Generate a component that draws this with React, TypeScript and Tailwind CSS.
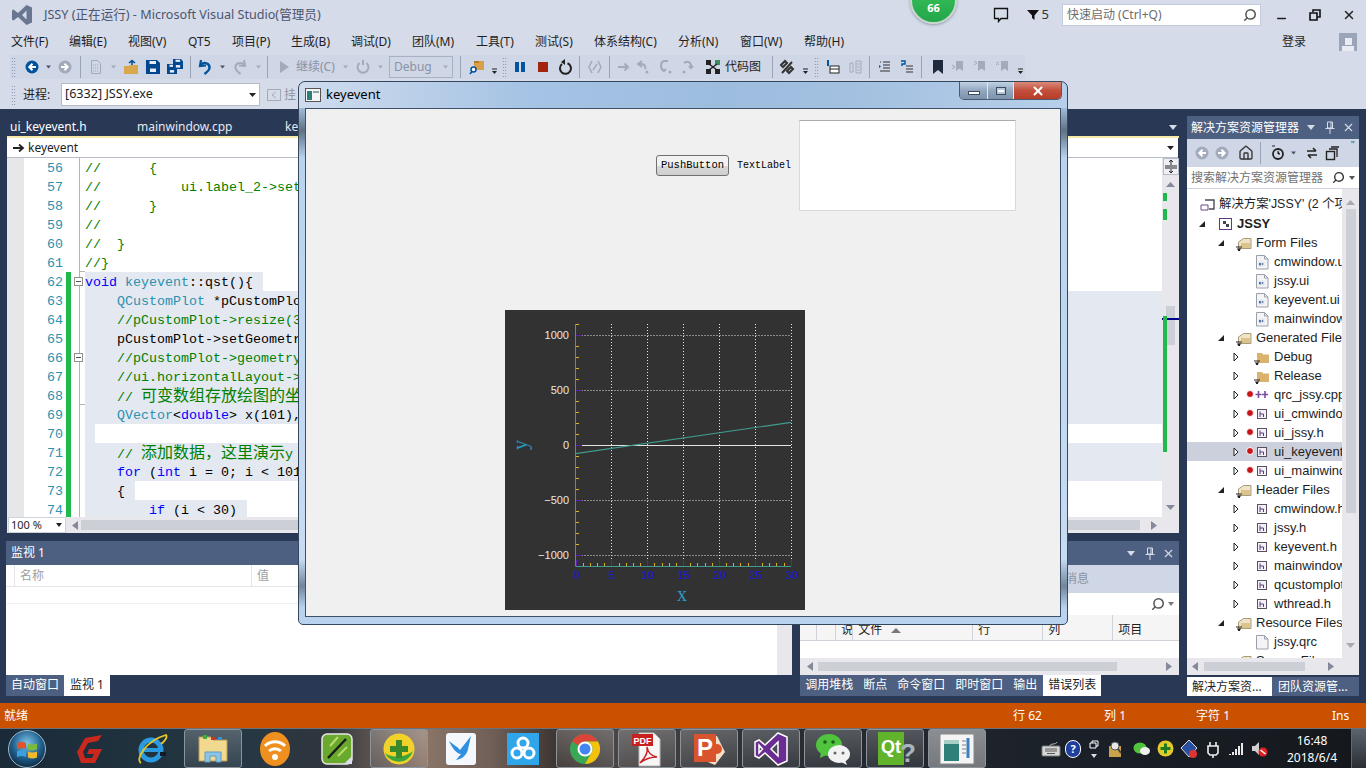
import type { ReactNode } from "react"
import { Search, X, Minus, Home } from "lucide-react"

type IconProps = { className?: string; w?: number; h?: number; children?: ReactNode }

function I({ className = "", w = 16, h = 16, children }: IconProps) {
  return (
    <svg width={w} height={h} viewBox={`0 0 ${w} ${h}`} className={`shrink-0 ${className}`}>
      {children}
    </svg>
  )
}

const Sep = ({ className = "" }: { className?: string }) => <div className={`w-px h-[22px] shrink-0 bg-[#9aa3b5] ${className}`} />

const Grip = ({ className = "" }: { className?: string }) => (
  <div className={`w-[5px] h-[20px] shrink-0 bg-[radial-gradient(#7b86a0_0.7px,transparent_0.8px)] bg-[length:2.5px_3px] ${className}`} />
)

const Drop = ({ className = "", color = "#4a5468" }: { className?: string; color?: string }) => (
  <I w={5} className={className}><path d="M0 6.5h5L2.5 9.5z" fill={color} /></I>
)

const Overflow = ({ className = "" }: { className?: string }) => (
  <I w={7} className={className}><path d="M1 10h5" stroke="#222" /><path d="M1 12h5l-2.5 3z" fill="#222" /></I>
)

const Circ = ({ color, dir }: { color: string; dir: "l" | "r" }) => (
  <>
    <circle cx="8" cy="8" r="6.5" fill={color} />
    <path d={dir === "l" ? "M12 8H6M8.5 4.8 5.3 8l3.2 3.2" : "M4 8h6M7.5 4.8 10.7 8l-3.2 3.2"} stroke="#fff" strokeWidth="2" fill="none" />
  </>
)

const Floppy = ({ x = 0, y = 0, s = 14 }: { x?: number; y?: number; s?: number }) => {
  const k = s / 14
  return (
    <g transform={`translate(${x} ${y}) scale(${k})`}>
      <path d="M0 0h11l3 3v11H0z" fill="#00478f" />
      <rect x="3.5" y="1" width="6.5" height="3" fill="#e8edf5" />
      <rect x="4" y="8.5" width="6" height="3.5" fill="#e8edf5" />
    </g>
  )
}

const GrayArrow = ({ d }: { d: string }) => <path d={d} stroke="#a3abbb" strokeWidth="2" fill="none" />

const PinIcon = ({ className = "" }: { className?: string }) => (
  <svg width="10" height="13" viewBox="0 0 10 13" className={className}>
    <path d="M2.500 1h5v6h-5zM6 1v6M0.500 7.500h9M5 8v5" stroke="currentColor" fill="none" />
  </svg>
)

const IconFolderFilter = ({ solid = false }: { solid?: boolean }) => (
  <I w={16} h={16}>
    {solid ? (
      <path d="M3 4h5l1 1.5h6V14H3z" fill="#d9b26d" />
    ) : (
      <>
        <path d="M2.5 13.5V7l5-3.5h7.5v10z" fill="#efe3c6" stroke="#a99a7a" />
        <path d="M5 8h9v5H5z" fill="#dcc48f" />
      </>
    )}
    <path d="M0 12h6M1 14h4M2.5 14v2h1v-2" stroke="#222" strokeWidth="1" fill="none" />
  </I>
)

const IconFile = ({ label }: { label?: string }) => (
  <I w={14} h={16}>
    <path d="M1.5 1.5h8l3.5 3.5v10H1.5z" fill="#f4f4f6" stroke="#9aa0ab" />
    <path d="M9.5 1.5V5H13" fill="none" stroke="#9aa0ab" />
    {label && <rect x="3.5" y="7.5" width="6" height="5" fill="#e2e5ea" />}
    {label && <path d="M4.5 9v2h1.2V9M7.7 9v2" stroke="#4a6fa0" strokeWidth="1" fill="none" />}
  </I>
)

const IconH = () => (
  <I w={12} h={16}>
    <rect x="1.5" y="3.5" width="9" height="9" fill="#f4f0f8" stroke="#5a5060" />
    <path d="M4 5.5v5.5M4 8h3.5v3" stroke="#5a3a7a" fill="none" />
  </I>
)

type TreeRow = {
  text: string
  arrow?: "open" | "closed"
  level: "sol" | "proj" | "group" | "file"
  icon: ReactNode
  dot?: boolean
  bold?: boolean
  selected?: boolean
}

const uiIcon = <IconFile label="ui" />
const hRow = (text: string, dot = false, selected = false): TreeRow => ({
  text,
  arrow: "closed",
  level: "file",
  icon: <span className="w-[14px] flex justify-center"><IconH /></span>,
  dot,
  selected,
})

const tree: TreeRow[] = [
  {
    text: "解决方案'JSSY' (2 个项目)",
    level: "sol",
    icon: (
      <I w={15}>
        <path d="M5 3h9v9H9" stroke="#4b4b55" strokeWidth="1.4" fill="none" />
        <path d="M1 8h7v5H1z" fill="#fff" stroke="#6a4b8a" />
      </I>
    ),
  },
  {
    text: "JSSY",
    arrow: "open",
    level: "proj",
    bold: true,
    icon: (
      <I w={15}>
        <rect x="1.5" y="2.5" width="12" height="11" fill="#fff" stroke="#5e3a86" />
        <path d="M5 5v3h3v3h3V8H8V5z" fill="#40474f" />
      </I>
    ),
  },
  { text: "Form Files", arrow: "open", level: "group", icon: <IconFolderFilter /> },
  { text: "cmwindow.ui", level: "file", icon: uiIcon },
  { text: "jssy.ui", level: "file", icon: uiIcon },
  { text: "keyevent.ui", level: "file", icon: uiIcon },
  { text: "mainwindow.ui", level: "file", icon: uiIcon },
  { text: "Generated Files", arrow: "open", level: "group", icon: <IconFolderFilter /> },
  { text: "Debug", arrow: "closed", level: "file", icon: <IconFolderFilter solid /> },
  { text: "Release", arrow: "closed", level: "file", icon: <IconFolderFilter solid /> },
  {
    text: "qrc_jssy.cpp",
    arrow: "closed",
    level: "file",
    dot: true,
    icon: (
      <I w={14}>
        <path d="M3.5 4v7M0.5 7.5h6M10 4v7M7 7.5h6" stroke="#7a4aa0" strokeWidth="1.6" />
      </I>
    ),
  },
  hRow("ui_cmwindow.h", true),
  hRow("ui_jssy.h", true),
  hRow("ui_keyevent.h", true, true),
  hRow("ui_mainwindow.h", true),
  { text: "Header Files", arrow: "open", level: "group", icon: <IconFolderFilter /> },
  hRow("cmwindow.h"),
  hRow("jssy.h"),
  hRow("keyevent.h"),
  hRow("mainwindow.h"),
  hRow("qcustomplot.h"),
  hRow("wthread.h"),
  { text: "Resource Files", arrow: "open", level: "group", icon: <IconFolderFilter /> },
  { text: "jssy.qrc", level: "file", icon: <IconFile /> },
  { text: "Source Files", arrow: "open", level: "group", icon: <IconFolderFilter /> },
]

const levelPad: Record<TreeRow["level"], string> = {
  sol: "pl-[13px] text-[12.4px]",
  proj: "pl-[31px] text-[13px]",
  group: "pl-[50px] text-[13px]",
  file: "pl-[68px] text-[13px]",
}

function Tree() {
  return (
    <div className="flex-1 overflow-hidden pt-[6px] bg-white font-['Liberation_Sans','Noto_Sans_CJK_SC',sans-serif]">
      {tree.map((r) => (
        <div key={r.text} className={`relative h-[19px] flex items-center whitespace-nowrap text-[#1e1e1e] ${levelPad[r.level]} ${r.selected ? "bg-[#ccd0dc]" : ""}`}>
          {r.arrow === "open" && (
            <span className="absolute -ml-[20px] w-[8px] h-[8px]">
              <svg width="8" height="8"><path d="M7 1v6H1z" fill="#222" /></svg>
            </span>
          )}
          {r.arrow === "closed" && (
            <span className="absolute left-[46px]">
              <svg width="6" height="10"><path d="M1 1l4 4-4 4z" fill="#fff" stroke="#222" /></svg>
            </span>
          )}
          {r.dot && <span className="absolute left-[59px] w-[6px] h-[6px] rounded-full bg-[#c9141a] border border-white box-content -mt-px" />}
          <span className="flex justify-center w-[14px] shrink-0">{r.icon}</span>
          <span className={`ml-[5px] ${r.bold ? "font-bold" : ""}`}>{r.text}</span>
        </div>
      ))}
    </div>
  )
}

const comment = "text-[#008000]"
const cjk = "font-['Noto_Sans_CJK_SC'] text-[16px] leading-none"
const selFull = "w-full bg-[#e3e8f1]"

const Ty = ({ children }: { children: ReactNode }) => <span className="text-[#2b91af]">{children}</span>
const Kw = ({ children }: { children: ReactNode }) => <span className="text-[#0000ff]">{children}</span>

const code: { n: number; sel?: string; body: ReactNode }[] = [
  { n: 56, body: <span className={comment}>{"//      {"}</span> },
  { n: 57, body: <span className={comment}>{"//          ui.label_2->setText"}</span> },
  { n: 58, body: <span className={comment}>{"//      }"}</span> },
  { n: 59, body: <span className={comment}>{"//"}</span> },
  { n: 60, body: <span className={comment}>{"//  }"}</span> },
  { n: 61, body: <span className={comment}>{"//}"}</span> },
  { n: 62, sel: "w-[178px] bg-[#e3e8f1]", body: <><Kw>void</Kw> <Ty>keyevent</Ty>{"::qst(){"}</> },
  { n: 63, sel: selFull, body: <>{"    "}<Ty>QCustomPlot</Ty>{" *pCustomPlot"}</> },
  { n: 64, sel: selFull, body: <span className={comment}>{"    //pCustomPlot->resize(300"}</span> },
  { n: 65, sel: selFull, body: <>{"    pCustomPlot->setGeometry"}</> },
  { n: 66, sel: selFull, body: <span className={comment}>{"    //pCustomPlot->geometry"}</span> },
  { n: 67, sel: selFull, body: <span className={comment}>{"    //ui.horizontalLayout->"}</span> },
  { n: 68, sel: selFull, body: <span className={comment}>{"    // "}<span className={cjk}>可变数组存放绘图的坐标</span></span> },
  { n: 69, sel: selFull, body: <>{"    "}<Ty>QVector</Ty>{"<"}<Kw>double</Kw>{"> x(101),"}</> },
  { n: 70, sel: "w-[10px] bg-[#e3e8f1]", body: null },
  { n: 71, sel: selFull, body: <span className={comment}>{"    // "}<span className={cjk}>添加数据，这里演示</span>y</span> },
  { n: 72, sel: selFull, body: <>{"    "}<Kw>for</Kw>{" ("}<Kw>int</Kw>{" i = 0; i < 101"}</> },
  { n: 73, sel: "w-[50px] bg-[#e3e8f1]", body: <>{"    {"}</> },
  { n: 74, sel: "w-[162px] bg-[#e3e8f1]", body: <>{"        "}<Kw>if</Kw>{" (i < 30)"}</> },
]

function CodeEditor() {
  return (
    <div className="flex-1 overflow-hidden bg-white font-['Liberation_Mono','Noto_Sans_CJK_SC',monospace] text-[13.33px] leading-[22px]">
      {code.map((l) => (
        <div key={l.n} className="flex h-[19px] whitespace-pre">
          <div className="w-[17px] shrink-0 bg-[#e6e7e8]" />
          <div className="w-[39px] shrink-0 text-right text-[#2b91af]">{l.n}</div>
          <div className="w-[3px] shrink-0" />
          <div className={`w-[5px] shrink-0 ${l.n >= 62 ? "bg-[#1fba4b]" : ""}`} />
          <div className="relative w-[14px] shrink-0">
            <div className="absolute left-[8px] top-0 bottom-0 w-px bg-[#b4b4b4]" />
            {(l.n === 61 || l.n === 68) && <div className="absolute left-[8px] bottom-0 w-[6px] h-px bg-[#b4b4b4]" />}
            {(l.n === 62 || l.n === 66) && (
              <div className="absolute left-[3px] top-[5px] w-[9px] h-[9px] border border-[#8f8f8f] bg-white flex items-center justify-center">
                <div className="w-[5px] h-px bg-[#555]" />
              </div>
            )}
          </div>
          <div className="flex-1 min-w-0 overflow-hidden">
            <div className={`h-[19px] text-black ${l.sel ?? ""}`}>{l.body}</div>
          </div>
        </div>
      ))}
    </div>
  )
}

function Chart() {
  const x = (v: number) => Math.round(70.5 + (v / 30) * 215.2) + 0.5
  const y = (v: number) => Math.round(135 - (v / 500) * 55) + 0.5
  const xs = [0, 5, 10, 15, 20, 25, 30]
  const ys = [1000, 500, 0, -500, -1000]
  const xMinor = Array.from({ length: 31 }, (_, i) => i).filter((v) => v % 5 !== 0)
  const yMinor = Array.from({ length: 23 }, (_, i) => -1100 + i * 100).filter((v) => v % 500 !== 0)
  return (
    <svg width="300" height="300" viewBox="0 0 300 300" className="block ml-[199px] mt-[99px] bg-[#323232]">
      {xs.slice(1).map((v) => <line key={v} x1={x(v)} x2={x(v)} y1="14" y2="256" stroke="#e4e4e4" strokeDasharray="1 2" />)}
      {ys.map((v) => <line key={v} x1="70.5" x2="286" y1={y(v)} y2={y(v)} stroke="#e4e4e4" strokeDasharray="1 2" />)}
      <line x1="76" x2="286" y1="135.5" y2="135.5" stroke="#e2e2e2" strokeWidth="1.2" />
      <line x1="70.5" x2="286" y1="143.7" y2="112.3" stroke="#3f9c90" strokeWidth="1.2" />
      {xMinor.map((v) => <line key={v} x1={x(v)} x2={x(v)} y1="253" y2="256" stroke="#e0ab2c" />)}
      {yMinor.map((v) => <line key={v} x1="71" x2="74" y1={y(v)} y2={y(v)} stroke="#e0ab2c" />)}
      {xs.map((v) => <line key={v} x1={x(v)} x2={x(v)} y1="250" y2="256" stroke="#5b1fb5" />)}
      {ys.map((v) => <line key={v} x1="71" x2="77" y1={y(v)} y2={y(v)} stroke="#5b1fb5" />)}
      <line x1="70.5" x2="70.5" y1="14" y2="256" stroke="#3f9c90" />
      <line x1="70.5" x2="286" y1="256.5" y2="256.5" stroke="#3f9c90" />
      {ys.map((v) => (
        <text key={v} x="64" y={y(v) + 3} textAnchor="end" fill="#e8e8e8" fontSize="11" fontFamily="Liberation Sans">
          {v < 0 ? `−${-v}` : v}
        </text>
      ))}
      {xs.map((v) => (
        <text key={v} x={x(v)} y="269" textAnchor="middle" fill="#1a1ad2" fontSize="11.5" fontFamily="Liberation Sans">{v}</text>
      ))}
      <text x="177" y="291" textAnchor="middle" fill="#2a9bc4" fontSize="20" fontFamily="Liberation Serif">x</text>
      <text x="0" y="0" transform="translate(22 135) rotate(-90)" textAnchor="middle" fill="#2a9bc4" fontSize="20" fontFamily="Liberation Serif">y</text>
    </svg>
  )
}

function QtWindow() {
  return (
    <div className="absolute left-[298px] top-[81px] w-[770px] h-[544px] flex flex-col rounded-t-[7px] rounded-b-[5px] border border-[#35475c] px-[6px] pb-[7px] bg-[linear-gradient(180deg,#a8c4e4_0%,#9fb9d6_5%,#5f7183_9%,#b9d3ee_14%,#c7dcf2_88%,#71859b_93%,#b9d3ee_97%)]">
      <div className="relative h-[26px] shrink-0 -mx-[6px] px-[6px] flex items-center rounded-t-[7px] bg-[linear-gradient(90deg,#cfdcee_0%,#bcd0e9_14%,#a5c3e4_30%,#9dbddf_55%,#a3c0e0_72%,#b7cfea_100%)]">
        <I w={16}>
          <rect x="0.5" y="1.5" width="15" height="13" fill="#f5f5f5" stroke="#555" />
          <rect x="2" y="4" width="5" height="9" fill="#2e7f78" />
          <rect x="8" y="4" width="6" height="2" fill="#8aa" />
        </I>
        <span className="ml-[5px] text-[13px] text-black">keyevent</span>
        <div className="absolute right-[5px] top-0 h-[18px] w-[103px] flex rounded-b-[5px] border border-t-0 border-[#4a5b70] overflow-hidden">
          <div className="w-[28px] flex items-center justify-center bg-[linear-gradient(180deg,#c3d3e6,#92a6bd_50%,#7e93ab)] border-r border-[#dfe7f0]">
            <div className="w-[12px] h-[4px] mt-[5px] bg-white border border-[#3d4d60]" />
          </div>
          <div className="w-[26px] flex items-center justify-center bg-[linear-gradient(180deg,#c3d3e6,#92a6bd_50%,#7e93ab)] border-r border-[#dfe7f0]">
            <div className="w-[10px] h-[8px] border border-[#3d4d60] bg-[#b7c6d8] flex items-center justify-center">
              <div className="w-[6px] h-[2px] bg-white" />
            </div>
          </div>
          <div className="flex-1 flex items-center justify-center bg-[linear-gradient(180deg,#d98a7c,#c34f3c_50%,#b83c28)]">
            <X size={14} strokeWidth={3.5} className="text-white" />
          </div>
        </div>
      </div>
      <div className="flex-1 min-h-0 border border-[#3d5066] bg-[#f0f0f0]">
        <div className="flex items-center ml-[350px] mt-[11px] h-[91px] font-['Liberation_Mono',monospace] text-[10.5px] text-black">
          <button className="w-[73px] h-[21px] rounded-[3px] border border-[#707070] bg-[linear-gradient(180deg,#f2f2f2_50%,#d8d8d8_51%,#cfcfcf)]">PushButton</button>
          <span className="ml-[8px] w-[53px] text-center whitespace-nowrap text-[10px]">TextLabel</span>
          <div className="ml-[9px] w-[217px] h-[91px] bg-white border border-[#d9d9d9] border-t-[#ababab]" />
        </div>
        <Chart />
      </div>
    </div>
  )
}

function TopBar() {
  return (
    <div className="relative h-[30px] shrink-0 flex items-center">
      <svg width="22" height="22" viewBox="0 0 22 22" className="ml-[11px]">
        <path d="M15.5 1 21 3.5v15L15.5 21 7 13l-4.500 3.500L1 15.500V6.500L2.500 5.500 7 9zM15.500 6.500 11 11l4.500 4.500z" fill="#68768f" fillRule="evenodd" />
      </svg>
      <span className="ml-[11px] text-[12.6px] text-[#4a5570]">JSSY (正在运行) - Microsoft Visual Studio(管理员)</span>
      <div className="ml-auto flex items-center text-[#1e1e1e]">
        <svg width="16" height="16" viewBox="0 0 16 16">
          <path d="M1.500 1.500h13v10H8l-2.500 3v-3h-4z" fill="none" stroke="#111" strokeWidth="1.300" />
        </svg>
        <svg width="12" height="12" viewBox="0 0 12 12" className="ml-[18px]"><path d="M0 1h12L7.500 6.500V11L5 9V6.500z" fill="#111" /></svg>
        <span className="ml-[3px] text-[13px] text-[#333]">5</span>
        <div className="ml-[13px] w-[199px] h-[22px] bg-white border border-[#c3cbdc] flex items-center pl-[4px] text-[12px] text-[#6d6d6d]">
          <span>快速启动 (Ctrl+Q)</span>
          <Search size={14} strokeWidth={2.6} className="ml-auto mr-[3px] -scale-x-100 text-[#555]" />
        </div>
        <Minus size={13} strokeWidth={3} className="ml-[14px] mt-[6px]" />
        <svg width="12" height="12" viewBox="0 0 12 12" className="ml-[21px]">
          <path d="M4 3V1h7v7H8.500M1 4h7v7H1z" fill="none" stroke="#111" strokeWidth="1.600" />
        </svg>
        <X size={14} strokeWidth={2.5} className="ml-[21px] mr-[10px]" />
      </div>
    </div>
  )
}

const menus: [string, string][] = [
  ["文件(F)", "w-[58px]"],
  ["编辑(E)", "w-[59px]"],
  ["视图(V)", "w-[60px]"],
  ["QT5", "w-[44px]"],
  ["项目(P)", "w-[59px]"],
  ["生成(B)", "w-[60px]"],
  ["调试(D)", "w-[61px]"],
  ["团队(M)", "w-[64px]"],
  ["工具(T)", "w-[59px]"],
  ["测试(S)", "w-[59px]"],
  ["体系结构(C)", "w-[84px]"],
  ["分析(N)", "w-[62px]"],
  ["窗口(W)", "w-[64px]"],
  ["帮助(H)", "w-[60px]"],
]

function MenuBar() {
  return (
    <div className="h-[24px] shrink-0 flex items-center pl-[11px] text-[12px] text-[#1e1e1e]">
      {menus.map(([t, w]) => <span key={t} className={w}>{t}</span>)}
      <span className="ml-auto">登录</span>
      <div className="ml-[33px] mr-[9px] w-[18px] h-[18px] bg-[#9ba5b8] flex flex-col items-center justify-end">
        <div className="w-[7px] h-[7px] bg-[#e9ecf2] mb-px" />
        <div className="w-[12px] h-[5px] bg-[#e9ecf2]" />
      </div>
    </div>
  )
}

function ToolbarOne() {
  const gray = "#a3abbb"
  return (
    <div className="h-[26px] shrink-0 flex items-center">
      <div className="ml-[10px] w-[1015px] h-[24px] flex items-center bg-[#cfd6e5] text-[12px] text-[#8a93a5]">
        <Grip className="ml-px" />
        <I className="ml-[8px]"><Circ color="#00539c" dir="l" /></I>
        <Drop className="ml-[6px]" />
        <I className="ml-[6px]"><Circ color={gray} dir="r" /></I>
        <Sep className="ml-[7px]" />
        <I className="ml-[7px]"><path d="M3.500 1.500h6l3 3v10h-9z" fill="none" stroke={gray} /><path d="M5 6h6M5 9h6M5 12h6" stroke={gray} strokeDasharray="1 1" /></I>
        <Drop className="ml-[7px]" color={gray} />
        <I className="ml-[7px]"><path d="M1 7h5l1-1h8v9H1z" fill="#d8a84e" /><path d="M6 4 9 1.500 12 4M9 2v4" stroke="#00539c" strokeWidth="1.600" fill="none" /></I>
        <I className="ml-[6px]"><Floppy x={1} y={1} /></I>
        <I className="ml-[6px]"><Floppy x={0} y={5} s={10} /><Floppy x={6} y={0} s={10} /></I>
        <Sep className="ml-[7px]" />
        <I className="ml-[6px]"><path d="M4 1 3 7l6-.5" stroke="#00539c" strokeWidth="2.200" fill="none" /><path d="M3.500 6C7 2.500 13 4 12.500 9c-.3 2.500-2.500 4-5 6" stroke="#00539c" strokeWidth="2.400" fill="none" /></I>
        <Drop className="ml-[7px]" />
        <I className="ml-[7px]"><path d="M12 1l1 6-6-.5" stroke={gray} strokeWidth="2" fill="none" /><path d="M12.500 6C9 2.500 3 4 3.500 9c.3 2.500 2.500 4 5 6" stroke={gray} strokeWidth="2" fill="none" /></I>
        <Drop className="ml-[8px]" color={gray} />
        <Sep className="ml-[6px]" />
        <I className="ml-[8px]"><path d="M4 2l9 6-9 6z" fill={gray} /></I>
        <span className="ml-[4px] w-[40px] whitespace-nowrap">继续(C)</span>
        <Drop className="ml-[7px]" color={gray} />
        <I className="ml-[7px]"><path d="M8 1v5M4.500 4a5.500 5.500 0 1 0 7 0" stroke={gray} strokeWidth="2" fill="none" /></I>
        <Drop className="ml-[7px]" color={gray} />
        <div className="ml-[6px] w-[64px] h-[22px] border border-[#a9b2c4] flex items-center pl-[4px]">
          <span>Debug</span>
          <Drop className="ml-auto mr-[4px]" color={gray} />
        </div>
        <Sep className="ml-[7px]" />
        <I className="ml-[8px]"><path d="M5 2h10v9H5z" fill="#d9a04c" /><path d="M5 2h5v2H5z" fill="#b97d2a" /><circle cx="4.500" cy="10.500" r="2.500" fill="#fff" stroke="#00539c" strokeWidth="1.500" /><path d="M3 12.500 1 15" stroke="#00539c" strokeWidth="1.600" /></I>
        <Overflow className="ml-[6px]" />
        <Grip className="ml-[4px]" />
        <I className="ml-[5px]"><rect x="3" y="3" width="4" height="10" fill="#00539c" /><rect x="9" y="3" width="4" height="10" fill="#00539c" /></I>
        <I className="ml-[7px]"><rect x="3" y="3" width="10" height="10" fill="#a1260d" /></I>
        <I className="ml-[6px]"><path d="M10.500 4.200A5.500 5.500 0 1 1 5 5" stroke="#222" strokeWidth="2" fill="none" /><path d="M8 0v6L4 3z" fill="#222" /></I>
        <Sep className="ml-[6px]" />
        <I className="ml-[7px]"><path d="M5 2l-3 6 3 6M11 2l3 6-3 6M6 11l4-6" stroke={gray} strokeWidth="1.500" fill="none" /></I>
        <Sep className="ml-[6px]" />
        <I className="ml-[6px]"><GrayArrow d="M2 8h10M8.500 4.500 12 8l-3.500 3.500" /></I>
        <I className="ml-[4px]"><GrayArrow d="M6 2 2 5l4 3M2 5h3c4 0 5 3 4 5" /><circle cx="11" cy="13" r="1.500" fill={gray} /></I>
        <I className="ml-[6px]"><GrayArrow d="M10 2 6 2C2 3 2 10 6 12M4 10l2 2 2-2" /><circle cx="12" cy="13" r="1.500" fill={gray} /></I>
        <I className="ml-[5px]"><GrayArrow d="M5 4c4-3 8 0 7 5M10 7l2 2 2-2" /><circle cx="5" cy="13" r="1.500" fill={gray} /></I>
        <I className="ml-[10px]"><rect x="1" y="1" width="5" height="5" fill="#222" /><rect x="10" y="1" width="5" height="5" fill="#3c8c5a" /><rect x="1" y="10" width="5" height="5" fill="#222" /><rect x="10" y="10" width="5" height="5" fill="#222" /><path d="M4 5l8 6M12 5 4 11" stroke="#222" strokeWidth="1.500" /></I>
        <span className="ml-[4px] w-[37px] whitespace-nowrap text-[#1e1e1e]">代码图</span>
        <Sep className="ml-[10px]" />
        <I className="ml-[6px]"><path d="M2 6 6 2l2 2-4 4zM8 12l4-4 2 2-4 4zM3 14 13 3" stroke="#333" strokeWidth="2" fill="none" /></I>
        <Overflow className="ml-[7px]" />
        <Grip className="ml-[5px]" />
        <I className="ml-[6px]"><path d="M3 1v6" stroke="#00539c" strokeWidth="2" /><rect x="5" y="7" width="9" height="7" fill="#fff" stroke="#222" /><path d="M5 10h9" stroke="#222" /></I>
        <I className="ml-[6px]"><path d="M3 4h3v9H3zM9 2h5v12H9z" fill="none" stroke={gray} /><path d="M10 5h3M10 8h3M10 11h3" stroke={gray} /></I>
        <Sep className="ml-[6px]" />
        <I className="ml-[7px]"><path d="M3 3h1M6 3h7M6 6h7M6 9h7M3 12h10" stroke="#333" /><path d="M2 6l2 1.500L2 9" fill="#00539c" /></I>
        <I className="ml-[6px]"><path d="M7 7h7M7 10h7M7 13h7" stroke="#333" /><path d="M2 2h4v3H3v2" stroke="#00539c" strokeWidth="1.400" fill="none" /></I>
        <Sep className="ml-[6px]" />
        <I className="ml-[8px]"><path d="M3 1h10v14l-5-4-5 4z" fill="#1f2b3d" /></I>
        <I className="ml-[5px]"><path d="M5 2h7v10l-3.500-2.500L5 12z" fill={gray} /><path d="M1 6l3 2-3 2" stroke={gray} fill="none" /></I>
        <I className="ml-[6px]"><path d="M5 2h7v10l-3.500-2.500L5 12z" fill={gray} /><path d="M1 2l3 2-3 2" stroke={gray} fill="none" /></I>
        <I className="ml-[6px]"><path d="M6 2h7v10l-3.500-2.500L6 12z" fill={gray} /><path d="M1 3l3 3M4 3 1 6" stroke={gray} /></I>
        <Overflow className="ml-[6px]" />
      </div>
    </div>
  )
}

function ToolbarTwo() {
  return (
    <div className="h-[29px] shrink-0 flex items-center">
      <div className="ml-[10px] flex-1 h-[26px] flex items-center text-[12px] text-[#1e1e1e]">
        <Grip className="ml-px" />
        <span className="ml-[7px] w-[38px]">进程:</span>
        <div className="w-[199px] h-[23px] bg-white border border-[#b3bccd] flex items-center pl-[3px]">
          <span className="text-[12.6px]">[6332] JSSY.exe</span>
          <svg width="7" height="4" className="ml-auto mr-[3px]"><path d="M0 0h7L3.500 4z" fill="#222" /></svg>
        </div>
        <I className="ml-[6px]"><rect x="1.500" y="2.500" width="13" height="11" fill="none" stroke="#a3abbb" /><path d="M10 5 6 8l4 3" stroke="#a3abbb" fill="none" /></I>
        <span className="ml-[2px] text-[#8a93a5]">挂</span>
      </div>
    </div>
  )
}

const PanelTitleIcons = () => (
  <div className="ml-auto flex items-center text-[#d5dbe7]">
    <svg width="8" height="5"><path d="M0 0h8L4 5z" fill="currentColor" /></svg>
    <PinIcon className="ml-[10px]" />
    <X size={13} strokeWidth={2} className="ml-[7px] mr-[4px]" />
  </div>
)

function Explorer() {
  const gray = "#a3abbb"
  return (
    <div className="w-[172px] shrink-0 ml-[8px] mt-[7px] mb-[7px] flex flex-col">
      <div className="h-[23px] shrink-0 bg-[#4d6082] flex items-center pl-[4px] text-[12px] text-white whitespace-nowrap">
        解决方案资源管理器
        <PanelTitleIcons />
      </div>
      <div className="h-[28px] shrink-0 bg-[#cfd6e5] flex items-center pl-[7px]">
        <I><Circ color={gray} dir="l" /></I>
        <I className="ml-[4px]"><Circ color={gray} dir="r" /></I>
        <Home size={16} strokeWidth={2} className="ml-[8px] text-[#333]" />
        <div className="ml-[6px] w-px h-[22px] bg-[#9aa3b5]" />
        <I className="ml-[9px]"><circle cx="8" cy="9" r="5" fill="none" stroke="#222" strokeWidth="1.800" /><path d="M8 6v3h2M2 1h3" stroke="#222" /></I>
        <Drop className="ml-[5px]" />
        <I className="ml-[8px]"><path d="M3 6h9M9 3l3 3M13 10H4M7 13l-3-3" stroke="#222" strokeWidth="1.600" fill="none" /></I>
        <I className="ml-[4px]"><rect x="2.500" y="6.500" width="8" height="8" fill="none" stroke="#222" strokeWidth="1.400" /><path d="M5 4h8v8M7 2h8" stroke="#222" strokeWidth="1.300" fill="none" /></I>
        <span className="ml-[11px] mb-[16px] text-[8px] text-[#222] leading-none">''</span>
      </div>
      <div className="h-[22px] shrink-0 bg-white border-b border-[#d0d6e2] flex items-center pl-[4px] text-[12px] text-[#717171] whitespace-nowrap">
        搜索解决方案资源管理器
        <Search size={13} strokeWidth={2.6} className="ml-auto -scale-x-100 text-[#333]" />
        <svg width="6" height="4" className="ml-[4px] mr-[4px]"><path d="M0 0h6L3 4z" fill="#555" /></svg>
      </div>
      <div className="flex-1 min-h-0 flex bg-[#e8e8ec]">
        <div className="w-[155px] flex flex-col min-h-0">
          <Tree />
          <div className="h-[17px] shrink-0 bg-[#e8e8ec] flex items-center">
            <svg width="6" height="9" className="ml-[5px]"><path d="M6 0v9L0 4.500z" fill="#868999" /></svg>
            <div className="ml-[6px] w-[101px] h-[9px] bg-[#cccfd6]" />
            <svg width="6" height="9" className="ml-[23px]"><path d="M0 0v9l6-4.500z" fill="#868999" /></svg>
          </div>
        </div>
        <div className="flex-1 flex flex-col items-center pt-[11px]">
          <svg width="9" height="5"><path d="M0 5h9L4.500 0z" fill="#a7a9b2" /></svg>
          <div className="mt-[4px] w-[10px] h-[304px] bg-[#cccfd6]" />
          <svg width="9" height="5" className="mt-[130px]"><path d="M0 0h9L4.500 5z" fill="#a7a9b2" /></svg>
        </div>
      </div>
      <div className="h-[2px]" />
      <div className="h-[19px] shrink-0 flex text-[12px] whitespace-nowrap">
        <div className="w-[85px] bg-white text-[#1e1e1e] pl-[5px] leading-[19px]">解决方案资...</div>
        <div className="flex-1 bg-[#4d6082] text-white pl-[6px] leading-[19px]">团队资源管...</div>
      </div>
    </div>
  )
}

function EditorPane() {
  return (
    <div className="ml-[7px] w-[1172px] mt-[9px] h-[415px] flex flex-col">
      <div className="relative h-[18px] shrink-0 flex items-center text-[12px] text-white whitespace-nowrap">
        <span className="ml-[3px] w-[127px]">ui_keyevent.h</span>
        <span className="w-[148px] text-[#e3e8f1]">mainwindow.cpp</span>
        <span className="text-[#e3e8f1]">keyevent.cpp</span>
        <svg width="8" height="5" className="ml-auto mr-[2px] mt-px"><path d="M0 0h8L4 5z" fill="#d5dbe7" /></svg>
      </div>
      <div className="h-[2px] shrink-0 bg-[#f5e9a5]" />
      <div className="h-[20px] shrink-0 bg-white flex items-center border-b border-[#b6bdc9] text-[12px] text-[#1e1e1e] mr-px">
        <svg width="14" height="10" className="ml-[5px]"><path d="M1 5h10M7 1.500 11 5l-4 3.500" stroke="#222" strokeWidth="1.800" fill="none" /></svg>
        <span className="ml-[2px] pt-px">keyevent</span>
        <svg width="7" height="4" className="ml-auto mr-[4px]"><path d="M0 0h7L3.500 4z" fill="#222" /></svg>
      </div>
      <div className="flex-1 min-h-0 flex">
        <div className="flex-1 min-w-0 flex flex-col">
          <CodeEditor />
          <div className="h-[16px] shrink-0 bg-[#e8e8ec] flex items-center">
            <div className="ml-px w-[58px] h-[16px] bg-white border border-[#cfd3dc] flex items-center pl-[2px] text-[11px] text-[#1e1e1e]">
              100 %
              <svg width="6" height="4" className="ml-auto mr-[3px]"><path d="M0 0h6L3 4z" fill="#222" /></svg>
            </div>
            <svg width="6" height="9" className="ml-[6px]"><path d="M6 0v9L0 4.500z" fill="#868999" /></svg>
            <div className="ml-[3px] flex-1 h-[10px] bg-[#cccfd6]" />
            <svg width="6" height="9" className="ml-[11px] mr-[5px]"><path d="M0 0v9l6-4.500z" fill="#868999" /></svg>
          </div>
        </div>
        <div className="relative w-[17px] shrink-0 bg-[#e8e8ec] flex flex-col items-center">
          <div className="w-[16px] h-[17px] bg-[#eef0f5] border border-[#b6bdc9] flex items-center justify-center">
            <svg width="12" height="13"><path d="M0 6h12M0 8h12M6 0v5M4 2l2-2 2 2M6 9v4M4 11l2 2 2-2" stroke="#222" fill="none" /></svg>
          </div>
          <svg width="9" height="5" className="mt-[7px]"><path d="M0 5h9L4.500 0z" fill="#868999" /></svg>
          <div className="absolute left-[4px] top-[148px] w-[9px] h-[39px] bg-[#cccfd6]" />
          <div className="absolute left-0 right-0 top-[160px] h-[2px] bg-[#00008b]" />
          <div className="absolute left-[1px] top-[35px] w-[4px] h-[8px] bg-[#1fba4b]" />
          <div className="absolute left-[1px] top-[51px] w-[4px] h-[11px] bg-[#1fba4b]" />
          <div className="absolute left-[1px] top-[158px] w-[4px] h-[136px] bg-[#1fba4b]" />
          <svg width="9" height="5" className="absolute left-[4px] top-[347px]"><path d="M0 0h9L4.500 5z" fill="#868999" /></svg>
        </div>
      </div>
    </div>
  )
}

const rightTabs: [string, string][] = [
  ["调用堆栈", "w-[58px]"],
  ["断点", "w-[34px]"],
  ["命令窗口", "w-[58px]"],
  ["即时窗口", "w-[58px]"],
  ["输出", "w-[30px]"],
]

function BottomPanels() {
  return (
    <div className="mt-[8px] flex h-[155px]">
      {/* Watch */}
      <div className="ml-[6px] w-[787px] flex flex-col">
        <div className="h-[24px] shrink-0 bg-[#4d6082] text-[12px] text-white flex items-center pl-[5px]">监视 1</div>
        <div className="h-[110px] shrink-0 bg-white flex flex-col relative">
          <div className="h-[22px] shrink-0 flex border-b border-[#e3e5ea] text-[12px] text-[#a0a0a0]">
            <div className="w-[9px] border-r border-[#e3e5ea]" />
            <div className="w-[237px] border-r border-[#e3e5ea] pl-[5px] leading-[21px]">名称</div>
            <div className="flex-1 pl-[5px] leading-[21px]">值</div>
          </div>
          <div className="h-[17px] shrink-0 border-b border-[#f0f1f4]" />
          <div className="absolute right-0 top-[30px] bottom-0 w-[15px] bg-[#e8e8ec]" />
        </div>
        <div className="h-[21px] shrink-0 flex text-[12px]">
          <div className="w-[58px] bg-[#4d6082] text-white pl-[5px] leading-[20px]">自动窗口</div>
          <div className="w-[46px] bg-white text-[#1e1e1e] pl-[6px] leading-[20px]">监视 1</div>
        </div>
      </div>
      {/* Error list */}
      <div className="ml-[8px] w-[379px] flex flex-col">
        <div className="h-[24px] shrink-0 bg-[#4d6082] flex items-center"><PanelTitleIcons /></div>
        <div className="h-[28px] shrink-0 bg-[#cfd6e5] flex items-center justify-end pr-[90px] text-[12px] text-[#8a93a5]">消息</div>
        <div className="h-[22px] shrink-0 bg-white flex items-center justify-end">
          <Search size={14} strokeWidth={2.6} className="-scale-x-100 text-[#555]" />
          <svg width="6" height="4" className="ml-[3px] mr-[5px]"><path d="M0 0h6L3 4z" fill="#777" /></svg>
        </div>
        <div className="h-[26px] shrink-0 flex bg-[#f5f5f5] border-b border-[#cfd2d9] text-[12px] text-[#1e1e1e] leading-[30px]">
          <div className="w-[17px] border-r border-[#cfd2d9]" />
          <div className="w-[19px] border-r border-[#cfd2d9]" />
          <div className="w-[17px] border-r border-[#cfd2d9] overflow-hidden pl-[5px]">说明</div>
          <div className="w-[120px] border-r border-[#cfd2d9] pl-[5px] flex items-start">
            文件
            <svg width="10" height="5" className="ml-[9px] mt-[13px]"><path d="M0 5h10L5 0z" fill="#777" /></svg>
          </div>
          <div className="w-[70px] border-r border-[#cfd2d9] pl-[5px]">行</div>
          <div className="w-[70px] border-r border-[#cfd2d9] pl-[5px]">列</div>
          <div className="flex-1 pl-[5px]">项目</div>
        </div>
        <div className="h-[17px] shrink-0 bg-white" />
        <div className="h-[17px] shrink-0 bg-[#e8e8ec] flex items-center">
          <svg width="6" height="9" className="ml-[7px]"><path d="M6 0v9L0 4.500z" fill="#868999" /></svg>
          <div className="ml-[5px] w-[299px] h-[9px] bg-[#cccfd6]" />
          <svg width="6" height="9" className="ml-auto mr-[7px]"><path d="M0 0v9l6-4.500z" fill="#868999" /></svg>
        </div>
        <div className="h-[21px] shrink-0 flex text-[12px] whitespace-nowrap">
          <div className="flex bg-[#4d6082] text-white pl-[5px] leading-[20px]">
            {rightTabs.map(([t, w]) => <span key={t} className={w}>{t}</span>)}
          </div>
          <div className="w-[58px] bg-white text-[#1e1e1e] pl-[5px] leading-[20px]">错误列表</div>
        </div>
      </div>
    </div>
  )
}

function StatusBar() {
  return (
    <div className="h-[25px] shrink-0 bg-[#ca5100] flex items-center text-[12px] text-white whitespace-nowrap">
      <span className="ml-[4px]">就绪</span>
      <span className="ml-[985px] w-[91px]">行 62</span>
      <span className="w-[92px]">列 1</span>
      <span className="w-[136px]">字符 1</span>
      <span>Ins</span>
    </div>
  )
}

const Orb = () => (
  <svg width="46" height="40" viewBox="0 0 46 40">
    <defs>
      <radialGradient id="orb" cx="50%" cy="35%" r="65%">
        <stop offset="0%" stopColor="#7fc4e8" />
        <stop offset="60%" stopColor="#20608f" />
        <stop offset="100%" stopColor="#0d2a42" />
      </radialGradient>
    </defs>
    <circle cx="23" cy="20" r="18.500" fill="url(#orb)" stroke="#9db8c8" />
    <path d="M13 14q5-2 9 0v6q-4-2-9 0z" fill="#e2532a" />
    <path d="M24 14.500q4 2 9 0v6q-5 2-9 0z" fill="#7cbb3c" />
    <path d="M13 22q5-2 9 0v6q-4-2-9 0z" fill="#3c9fe0" />
    <path d="M24 22.500q4 2 9 0v6q-5 2-9 0z" fill="#f2b92d" />
  </svg>
)

const apps: { key: string; active?: boolean; bright?: boolean; icon: ReactNode }[] = [
  { key: "g", icon: <svg width="34" height="34" viewBox="0 0 34 34"><path d="M30 3 13 6 5 20l4 11h14l7-14H17l-2 5h7l-2 4h-7l-2-6 5-9 10-2z" fill="#c8281d" /></svg> },
  {
    key: "ie",
    icon: (
      <svg width="34" height="34" viewBox="0 0 34 34">
        <circle cx="17" cy="18" r="10" fill="none" stroke="#2b9ae0" strokeWidth="5" />
        <path d="M8 18h19" stroke="#2b9ae0" strokeWidth="4" />
        <path d="M26 22h6" stroke="#0f1c28" strokeWidth="4" />
        <path d="M7 31c-6-3 4-22 25-28 2 2-2 7-5 9" fill="none" stroke="#e8c72c" strokeWidth="1.800" />
      </svg>
    ),
  },
  {
    key: "folder",
    active: true,
    icon: (
      <svg width="34" height="34" viewBox="0 0 34 34">
        <path d="M3 5h12l2 3h14v21H3z" fill="#f1d98f" stroke="#b99a4e" />
        <rect x="7" y="3" width="4" height="4" fill="#3cae3c" /><rect x="15" y="5" width="4" height="3" fill="#c0392b" /><rect x="22" y="5" width="4" height="3" fill="#3a8fd0" />
        <path d="M9 30V20h16v10h-5v-6h-6v6z" fill="#8cc4e8" stroke="#5f9cc4" />
      </svg>
    ),
  },
  {
    key: "wifi",
    icon: (
      <svg width="34" height="38" viewBox="0 0 34 38">
        <ellipse cx="17" cy="19" rx="15" ry="17" fill="#ee8f1f" />
        <path d="M7 16a14 14 0 0 1 20 0M11 21a9 9 0 0 1 12 0" stroke="#fff" strokeWidth="3" fill="none" />
        <circle cx="17" cy="27" r="3" fill="#fff" />
      </svg>
    ),
  },
  {
    key: "notes",
    icon: (
      <svg width="34" height="34" viewBox="0 0 34 34">
        <rect x="2" y="2" width="30" height="30" rx="5" fill="#69a92d" stroke="#e8e8e8" strokeWidth="1.500" />
        <path d="M8 26 26 7" stroke="#1c1c1c" strokeWidth="2.500" />
        <path d="M10 14 18 5M18 24l9-9" stroke="#b8dc6a" strokeWidth="2" />
        <path d="M24 32l8-8v8z" fill="#dde" />
      </svg>
    ),
  },
  {
    key: "360",
    active: true,
    icon: (
      <svg width="34" height="36" viewBox="0 0 34 36">
        <circle cx="17" cy="18" r="15.500" fill="#f0d22b" />
        <path d="M3 22c4 10 22 14 28-2-6 6-20 8-28 2z" fill="#3ba43b" />
        <path d="M14 9h6v6h6v6h-6v6h-6v-6H8v-6h6z" fill="#3a8a2a" />
      </svg>
    ),
  },
  {
    key: "bird",
    icon: (
      <svg width="34" height="34" viewBox="0 0 34 34">
        <rect x="2" y="1" width="30" height="32" rx="3" fill="#f4f8fc" />
        <path d="M5 9c3 3 8 5 11 9l11-14-3 13c-1 6-6 10-12 11l5-6c-4 0-9-6-12-13z" fill="#2f8fe0" />
      </svg>
    ),
  },
  {
    key: "baidu",
    icon: (
      <svg width="34" height="34" viewBox="0 0 34 34">
        <rect x="1" y="1" width="32" height="32" fill="#2fa5ea" />
        <circle cx="17" cy="11" r="5" fill="none" stroke="#fff" strokeWidth="3" />
        <circle cx="11" cy="21" r="5" fill="none" stroke="#fff" strokeWidth="3" />
        <circle cx="23" cy="21" r="5" fill="none" stroke="#fff" strokeWidth="3" />
      </svg>
    ),
  },
  {
    key: "chrome",
    active: true,
    icon: (
      <svg width="34" height="34" viewBox="0 0 34 34">
        <circle cx="17" cy="17" r="15" fill="#3aa757" />
        <path d="M17 2a15 15 0 0 1 13 7.500H17a7.500 7.500 0 0 0-6.500 3.800L4 9.500A15 15 0 0 1 17 2z" fill="#db4437" />
        <path d="M30 9.500A15 15 0 0 1 17 32l6.500-11.200A7.500 7.500 0 0 0 17 9.500z" fill="#f4c20d" />
        <circle cx="17" cy="17" r="7.500" fill="#fff" />
        <circle cx="17" cy="17" r="5.500" fill="#4285f4" />
      </svg>
    ),
  },
  {
    key: "pdf",
    active: true,
    icon: (
      <svg width="34" height="36" viewBox="0 0 34 36">
        <path d="M9 2h15l6 6v27H9z" fill="#f6f6f6" stroke="#bbb" />
        <rect x="2" y="3" width="21" height="12" fill="#c8201e" />
        <text x="12.500" y="12.500" textAnchor="middle" fontSize="9" fontWeight="700" fill="#fff" fontFamily="Liberation Sans">PDF</text>
        <path d="M10 32c6-6 8-12 7-16 1 6 4 9 10 10-6 0-12 2-17 6z" fill="none" stroke="#c8201e" strokeWidth="1.500" />
      </svg>
    ),
  },
  {
    key: "ppt",
    active: true,
    icon: (
      <svg width="36" height="36" viewBox="0 0 36 36">
        <path d="M12 5h14l8 16-10 13-12-5z" fill="#f6dfc8" />
        <rect x="3" y="3" width="22" height="28" fill="#d9542c" />
        <text x="14" y="25" textAnchor="middle" fontSize="24" fontWeight="700" fill="#fff" fontFamily="Liberation Sans">P</text>
        <circle cx="26" cy="18" r="5" fill="#d9542c" />
      </svg>
    ),
  },
  {
    key: "vs",
    active: true,
    icon: (
      <svg width="36" height="36" viewBox="0 0 36 36">
        <path d="M25 2l9 4v24l-9 4L12 22l-6 5-4-2V11l4-2 6 5zM25 11l-7 7 7 7zM6 14v8l3.500-4z" fill="#6a2c91" fillRule="evenodd" stroke="#fff" strokeWidth="1.500" />
      </svg>
    ),
  },
  {
    key: "wechat",
    active: true,
    icon: (
      <svg width="36" height="34" viewBox="0 0 36 34">
        <ellipse cx="14" cy="13" rx="13" ry="11" fill="#4fc43c" />
        <path d="M6 20l-1 6 6-3z" fill="#4fc43c" />
        <circle cx="10" cy="10" r="1.800" fill="#1c5c1c" /><circle cx="18" cy="10" r="1.800" fill="#1c5c1c" />
        <ellipse cx="24" cy="22" rx="11" ry="9" fill="#f2f2f2" />
        <path d="M30 28l2 5-6-3z" fill="#f2f2f2" />
        <circle cx="20" cy="21" r="1.500" fill="#666" /><circle cx="28" cy="21" r="1.500" fill="#666" />
      </svg>
    ),
  },
  {
    key: "qt",
    active: true,
    icon: (
      <div className="relative w-[36px] h-[36px] font-['Liberation_Sans']">
        <div className="absolute left-[1px] top-[1px] w-[26px] h-[33px] bg-[#62b32c] text-white text-[18px] font-bold leading-[30px] text-center">Qt</div>
        <span className="absolute left-[23px] top-[8px] text-[26px] font-bold leading-[28px] text-[#aab4bc]">?</span>
      </div>
    ),
  },
  {
    key: "app",
    active: true,
    bright: true,
    icon: (
      <svg width="36" height="32" viewBox="0 0 36 32">
        <rect x="1" y="1" width="34" height="30" fill="#f4f4f4" stroke="#888" />
        <rect x="5" y="7" width="15" height="21" fill="#2e8178" />
        <rect x="5" y="7" width="15" height="4" fill="#a7cfc8" />
        <path d="M29 5v20" stroke="#3a7fc0" strokeWidth="3" />
        <path d="M23 8h4M23 12h4M23 16h4M23 20h4" stroke="#bbb" strokeWidth="2" />
      </svg>
    ),
  },
]

function Taskbar() {
  return (
    <div className="relative h-[40px] shrink-0 flex border-t border-[#6c7078] overflow-hidden bg-[linear-gradient(90deg,#1a2a38_0%,#263844_18%,#30353c_24%,#8b7568_31%,#6f5f57_36%,#3a3330_41%,#4b4646_45%,#2a2e34_56%,#1c222a_75%,#14181d_100%)] text-white">
      <div className="ml-[4px] w-[46px] flex items-center"><Orb /></div>
      <div className="ml-[10px] flex gap-[4px]">
        {apps.map((a) => (
          <div
            key={a.key}
            className={`w-[58px] h-[39px] flex items-center justify-center rounded-[3px] ${a.active ? "border border-[#8d939b] bg-[linear-gradient(180deg,rgba(255,255,255,0.22),rgba(255,255,255,0.07))]" : ""} ${a.bright ? "bg-[#ffffff55]" : ""}`}
          >
            {a.icon}
          </div>
        ))}
      </div>
      <Tray />
    </div>
  )
}

function Tray() {
  return (
    <div className="ml-auto flex items-center">
      <svg width="20" height="16" viewBox="0 0 20 16"><rect x="1" y="5" width="18" height="10" rx="1" fill="#d8d8d8" stroke="#777" /><path d="M4 8h12M4 10h12M6 12.500h8" stroke="#555" /><path d="M9 5c0-3 6-1 7-4" stroke="#bbb" fill="none" /></svg>
      <div className="ml-[4px] w-[16px] h-[18px] rounded-full bg-[#1f3f9f] border border-white text-[11px] text-white font-bold text-center leading-[16px]">?</div>
      <div className="ml-[6px] w-[14px] flex flex-col items-center">
        <svg width="10" height="9"><path d="M3 3V1h6v5H7M1 3h6v5H1z" stroke="#fff" fill="none" /></svg>
        <svg width="6" height="4" className="mt-[5px]"><path d="M0 0h6L3 4z" fill="#ddd" /></svg>
      </div>
      <svg width="16" height="18" viewBox="0 0 16 18" className="ml-[6px]"><rect x="2" y="6" width="12" height="11" fill="#c9a24a" /><circle cx="8" cy="6" r="4" fill="#e8e8e8" stroke="#555" /><path d="M11 9l3 4" stroke="#444" strokeWidth="2" /></svg>
      <svg width="18" height="16" viewBox="0 0 18 16" className="ml-[10px]"><ellipse cx="7" cy="7" rx="6.500" ry="5.500" fill="#4fc43c" /><ellipse cx="12" cy="10" rx="5" ry="4" fill="#f0f0f0" /></svg>
      <svg width="17" height="17" viewBox="0 0 17 17" className="ml-[6px]"><circle cx="8.500" cy="8.500" r="8" fill="#e5cb2a" /><path d="M7 3.500h3v3.500h3.500v3H10v3.500H7V10H3.500V7H7z" fill="#1f7a1f" /></svg>
      <svg width="18" height="20" viewBox="0 0 18 20" className="ml-[6px]"><path d="M9 1l8 8-8 9-8-9z" fill="#2a4fa0" stroke="#ddd" /><circle cx="13" cy="15" r="4" fill="#d33" /></svg>
      <svg width="14" height="18" viewBox="0 0 14 18" className="ml-[8px]"><path d="M2 6h10v7l-2 2H4l-2-2zM4 2v4M10 2v4M7 15v3" stroke="#eee" strokeWidth="1.600" fill="none" /></svg>
      <svg width="16" height="14" viewBox="0 0 16 14" className="ml-[9px]"><path d="M1 12v1M4 10v3M7 7v6M10 4v9M13 1v12" stroke="#fff" strokeWidth="1.800" /></svg>
      <svg width="16" height="18" viewBox="0 0 16 18" className="ml-[7px]"><path d="M0 6h3l4-4v13l-4-4H0z" fill="#d0d0d0" /><circle cx="11" cy="12" r="4.500" fill="#d22" /><path d="M8.500 10l5 4" stroke="#fff" strokeWidth="1.500" /></svg>
      <div className="ml-[9px] w-[70px] flex flex-col items-center text-[12px] leading-[17px] font-['Noto_Sans',sans-serif]">
        <span>16:48</span>
        <span>2018/6/4</span>
      </div>
      <div className="ml-[4px] w-[15px] h-[39px] border-l border-[#666] bg-[linear-gradient(180deg,#5b636b,#2a2f35)]" />
    </div>
  )
}

export default function App() {
  return (
    <div className="relative w-[1366px] h-[768px] overflow-hidden flex flex-col bg-[#d6dbe9] font-['Noto_Sans','Noto_Sans_CJK_SC',sans-serif]">
      <TopBar />
      <MenuBar />
      <ToolbarOne />
      <ToolbarTwo />

      <div className="flex-1 min-h-0 flex bg-[#293955]">
        <div className="w-[1179px] shrink-0 flex flex-col">
          <EditorPane />
          <BottomPanels />
        </div>
        <Explorer />
      </div>

      <StatusBar />
      <Taskbar />

      {/* floating ball */}
      <div className="absolute left-[910px] -top-[23px] w-[47px] h-[47px] rounded-full border-2 border-[#c9d6cc] bg-[linear-gradient(180deg,#3fc75c,#22a64a)] shadow-[0_1px_3px_#8897a8] flex items-end justify-center pb-[9px] text-[11px] font-bold leading-none text-white">
        66
      </div>

      <QtWindow />
    </div>
  )
}
